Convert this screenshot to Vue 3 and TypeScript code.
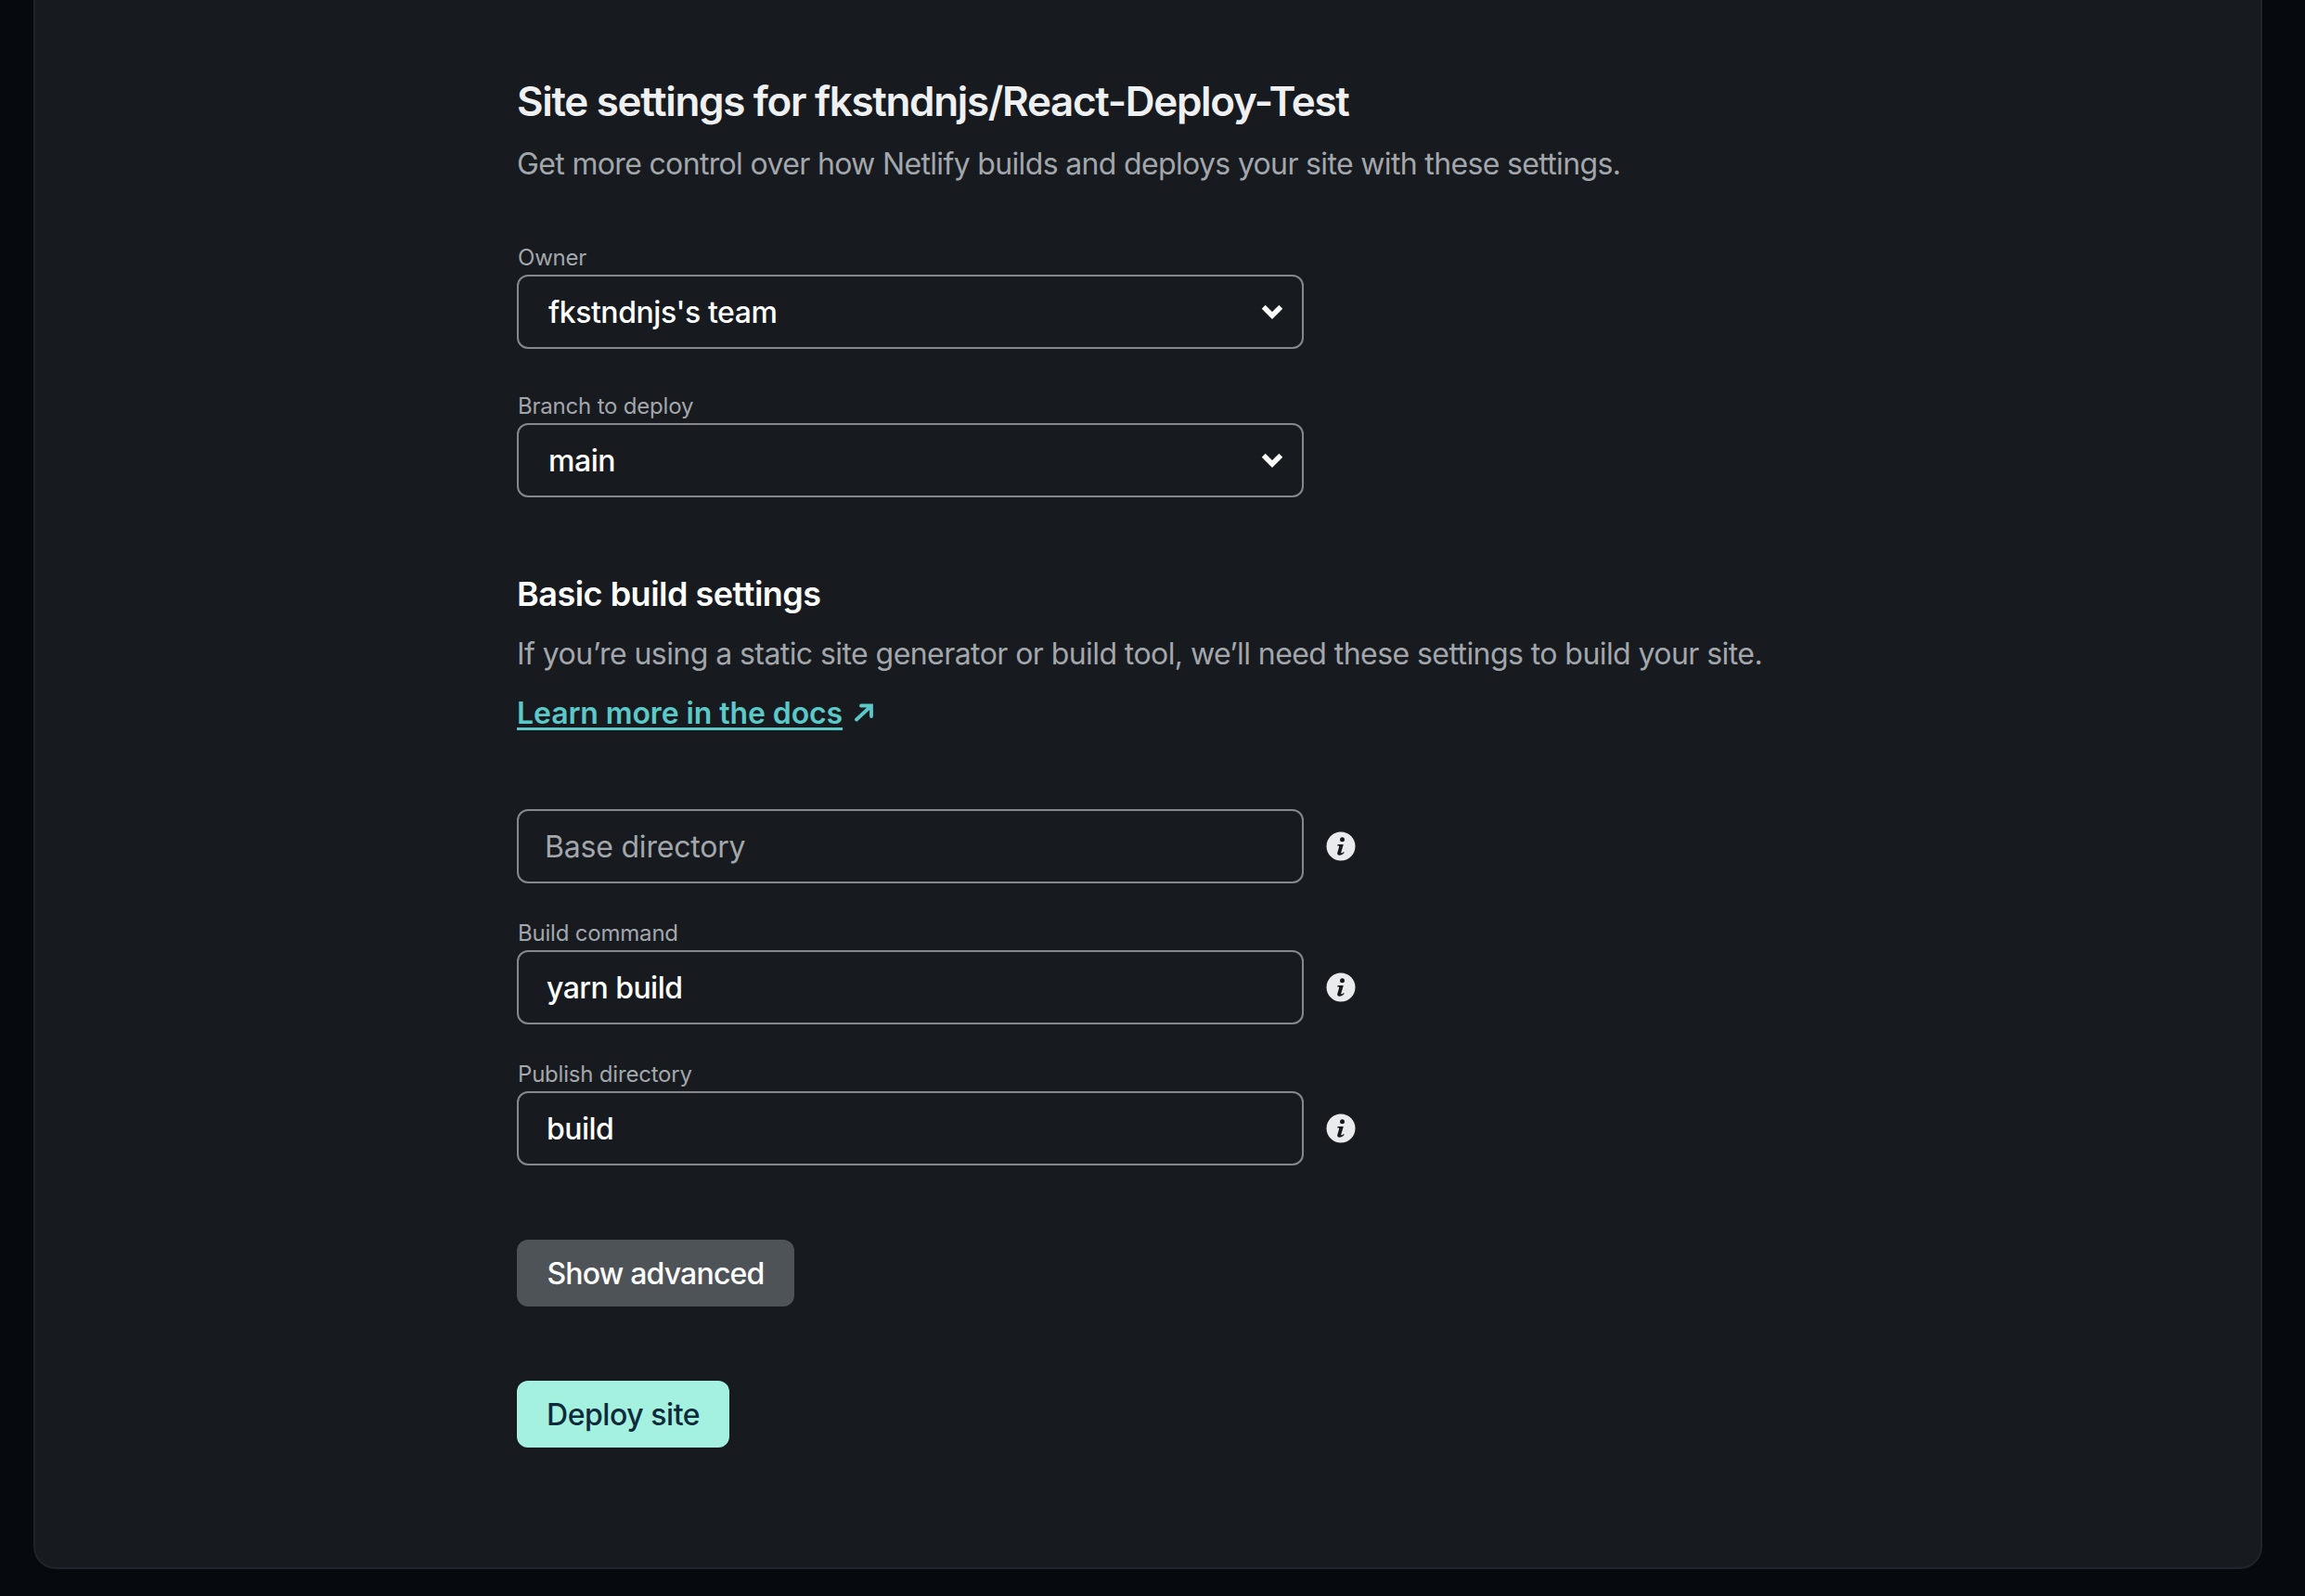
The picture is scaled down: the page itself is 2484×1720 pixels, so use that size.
<script setup lang="ts">
const selects = [
  { label: "Owner", value: "fkstndnjs's team" },
  { label: "Branch to deploy", value: "main" },
];

const inputs = [
  { label: "", value: "", placeholder: "Base directory" },
  { label: "Build command", value: "yarn build", placeholder: "" },
  { label: "Publish directory", value: "build", placeholder: "" },
];
</script>

<template>
  <div class="page">
    <main class="card">
      <h1 class="title">Site settings for fkstndnjs/React-Deploy-Test</h1>
      <p class="lead">Get more control over how Netlify builds and deploys your site with these settings.</p>

      <div class="selects">
        <div v-for="item in selects" :key="item.label" class="field">
          <label class="field-label">{{ item.label }}</label>
          <div class="control select">
            <span>{{ item.value }}</span>
            <svg class="chevron" viewBox="0 0 24 16" width="24" height="16">
              <path d="M2.700 2.700 12 12l9.300-9.300" fill="none" stroke="#fff" stroke-width="5.500" />
            </svg>
          </div>
        </div>
      </div>

      <h2 class="subtitle">Basic build settings</h2>
      <p class="lead build-lead">If you’re using a static site generator or build tool, we’ll need these settings to build your site.</p>
      <div class="docs">
        <a class="docs-link">Learn more in the docs</a>
        <svg viewBox="0 0 22 20" width="22" height="20">
          <path d="M3 17.500 18.500 3M8 2.500h11V14" fill="none" stroke="#5cc8c8" stroke-width="3.800" stroke-linecap="round" />
        </svg>
      </div>

      <div class="inputs">
        <div v-for="item in inputs" :key="item.placeholder + item.label" class="input-row">
          <div class="field input-field">
            <label v-if="item.label" class="field-label">{{ item.label }}</label>
            <div class="control" :class="{ placeholder: !item.value }">{{ item.value || item.placeholder }}</div>
          </div>
          <svg class="info" viewBox="0 0 32 32" width="32" height="32">
            <circle cx="16" cy="16" r="15.500" fill="#e9ebed" />
            <circle cx="17.500" cy="8.800" r="2.500" fill="#171a1f" />
            <path d="M12.500 14h6.300l-2.500 8.600c-.2.800.5 1 1.100.6l1.700-1.200.5.900c-1.600 1.700-3.200 2.800-5 2.800-2 0-2.800-1.100-2.300-2.900l1.800-6.200c.2-.8-.1-1-1.800-1.100z" fill="#171a1f" />
          </svg>
        </div>
      </div>

      <button class="btn btn-secondary">Show advanced</button>
      <button class="btn btn-primary">Deploy site</button>
    </main>
  </div>
</template>

<style scoped>
.page {
  height: 1720px;
  overflow: hidden;
  background: #060a0e;
  font-family: Inter, "Liberation Sans", sans-serif;
}

.card {
  box-sizing: border-box;
  display: flex;
  flex-direction: column;
  align-items: flex-start;
  width: 2402px;
  height: 1691px;
  margin-left: 36px;
  padding: 81px 0 0 519px;
  background: #171a1f;
  border: 2px solid #20242a;
  border-top: 0;
  border-radius: 0 0 24px 24px;
}

.title {
  margin: 0;
  color: #eef0f1;
  font-size: 44px;
  font-weight: 600;
  line-height: 56px;
  letter-spacing: -1.33px;
}

.lead {
  margin: 16px 0 0;
  color: #a3a7ac;
  font-size: 32px;
  line-height: 48px;
  letter-spacing: -0.655px;
}

.selects {
  display: flex;
  flex-direction: column;
  gap: 46px;
  margin-top: 61px;
}

.field {
  display: flex;
  flex-direction: column;
  width: 848px;
}

.field-label {
  height: 34px;
  padding-left: 1px;
  color: #a3a7ac;
  font-size: 24px;
  line-height: 32px;
  letter-spacing: -0.2px;
}

.control {
  box-sizing: border-box;
  display: flex;
  align-items: center;
  height: 80px;
  padding: 0 30px;
  color: #fff;
  border: 2px solid #85888c;
  border-radius: 12px;
  font-size: 32px;
  font-weight: 500;
  letter-spacing: -0.55px;
}

.control.placeholder {
  color: #a3a7ac;
  font-weight: 400;
  padding-left: 28px;
  letter-spacing: -0.2px;
}

.select {
  justify-content: space-between;
  padding: 0 20px 0 32px;
  letter-spacing: -0.45px;
}

.subtitle {
  margin: 80px 0 0;
  color: #fff;
  font-size: 36px;
  font-weight: 600;
  line-height: 48px;
  letter-spacing: -0.5px;
}

.build-lead {
  margin-top: 17px;
  letter-spacing: -0.57px;
}

.docs {
  display: flex;
  align-items: center;
  gap: 12px;
  margin-top: 15px;
  height: 48px;
}

.docs-link {
  color: #5cc8c8;
  font-size: 32px;
  font-weight: 600;
  letter-spacing: -0.1px;
  text-decoration: underline;
  text-decoration-thickness: 3px;
  text-underline-offset: 4px;
}

.inputs {
  display: flex;
  flex-direction: column;
  gap: 38px;
  margin-top: 80px;
}

.input-row {
  display: flex;
  align-items: flex-end;
  gap: 24px;
}

.info {
  margin-bottom: 24px;
}

.btn {
  height: 72px;
  padding: 0 32px;
  border: 0;
  border-radius: 12px;
  font-family: inherit;
  font-size: 32px;
  font-weight: 500;
}

.btn-secondary {
  width: 299px;
  margin-top: 80px;
  color: #fff;
  background: #4e5358;
  letter-spacing: -0.82px;
}

.btn-primary {
  margin-top: 80px;
  color: #0e2a3b;
  background: #a4f1df;
  letter-spacing: -0.45px;
}
</style>
